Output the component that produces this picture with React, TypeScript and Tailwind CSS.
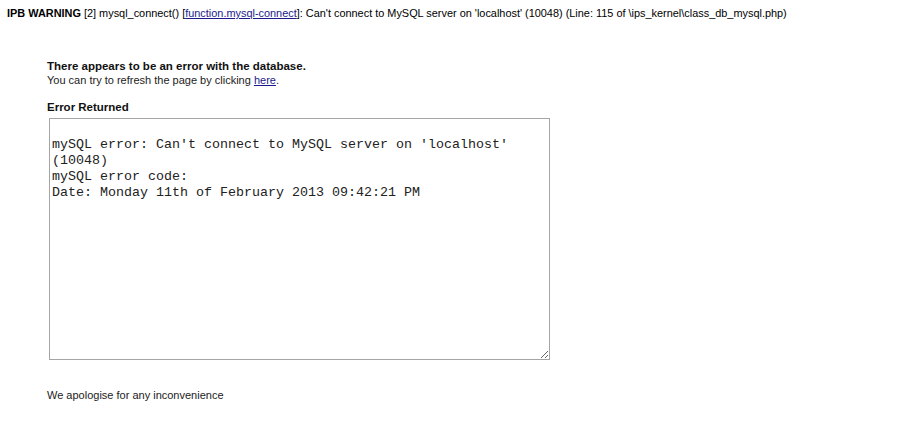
export default function App() {
  const errorText =
    "\nmySQL error: Can't connect to MySQL server on 'localhost' (10048)\nmySQL error code: \nDate: Monday 11th of February 2013 09:42:21 PM";

  return (
    <div className="min-h-[436px] w-[916px] bg-white text-black font-['Liberation_Sans',Arial,sans-serif] text-[11px]">
      <div className="pl-[7px] pt-[7px] text-[10.92px] leading-[13px]">
        <b>IPB WARNING</b> [2] mysql_connect() [
        <a href="#" className="text-[#1a1a8c] underline">
          function.mysql-connect
        </a>
        ]: Can't connect to MySQL server on 'localhost' (10048) (Line: 115 of \ips_kernel\class_db_mysql.php)
      </div>

      <div className="pl-[47px] pt-[39px]">
        <div className="font-bold text-[11.5px] leading-[14px] text-[#111]">
          There appears to be an error with the database.
        </div>
        <div className="leading-[14px] text-[#222]">
          You can try to refresh the page by clicking{" "}
          <a href="#" className="text-[#1a1a8c] underline">
            here
          </a>
          .
        </div>

        <div className="mt-[13px] font-bold text-[11.5px] leading-[14px] text-[#111]">Error Returned</div>

        <textarea
          readOnly
          defaultValue={errorText}
          className="mt-[4px] ml-[2px] block h-[242px] w-[501px] border border-[#a5a5a5] p-[2px] font-['Liberation_Mono','Courier_New',monospace] text-[13.33px] leading-[16px] text-[#222] outline-none"
        />

        <div className="mt-[28px] leading-[14px] text-[#222]">We apologise for any inconvenience</div>
      </div>
    </div>
  );
}
